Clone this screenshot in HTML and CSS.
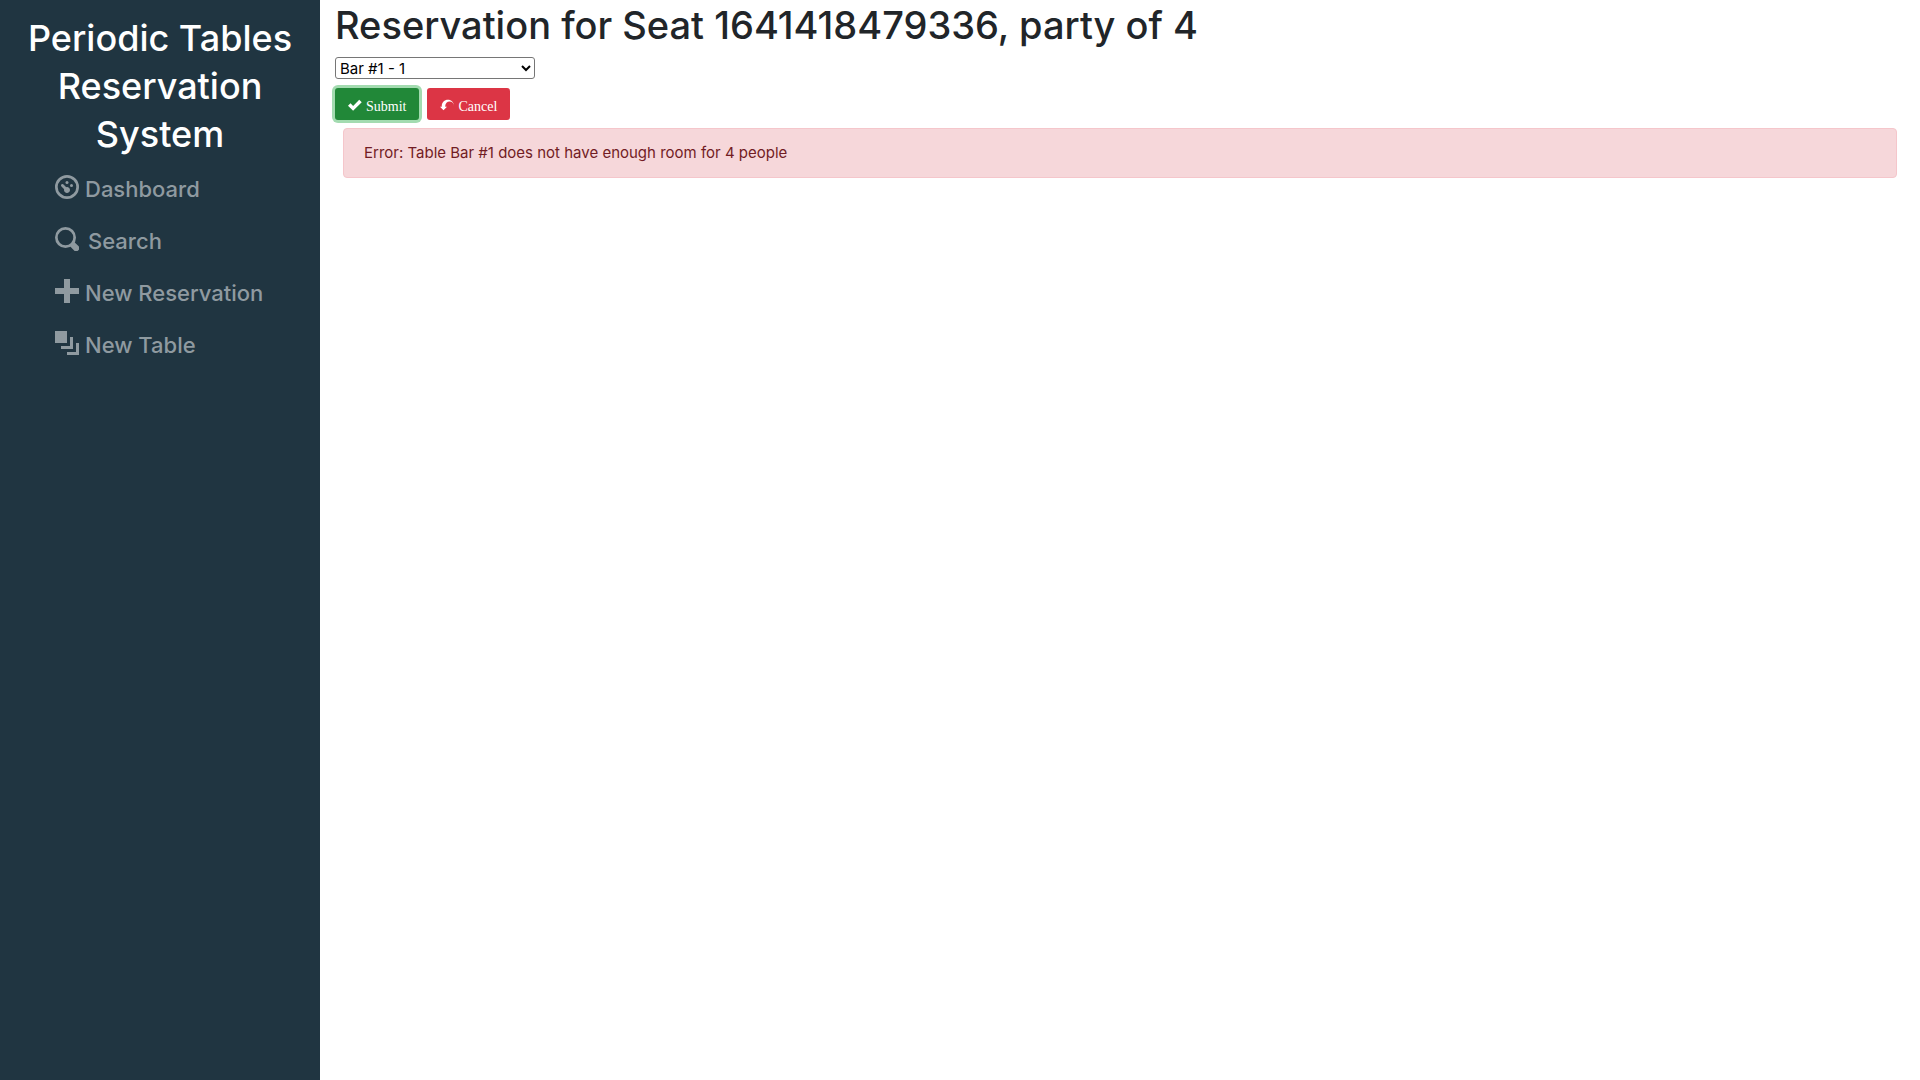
FILE: index.html
```html
<!DOCTYPE html>
<html lang="en">
<head>
<meta charset="utf-8">
<title>Periodic Tables Reservation System</title>
<link rel="stylesheet" href="styles.css">
</head>
<body>
<div class="layout">
  <aside class="sidebar">
    <div class="brand">Periodic Tables Reservation System</div>
    <nav class="nav">
      <a class="nav-link" href="#dashboard">
        <svg class="icon" viewBox="0 0 8 8" aria-hidden="true"><circle cx="4" cy="4" r="3.55" fill="none" stroke="currentColor" stroke-width=".9"/><circle cx="4" cy="2.5" r=".5"/><circle cx="5.5" cy="3.5" r=".5"/><path d="M2.34 3a.5.5 0 0 0-.19.84l.91.91c-.02.08-.06.16-.06.25 0 .55.45 1 1 1s1-.45 1-1-.45-1-1-1c-.09 0-.17.04-.25.06l-.91-.91a.5.5 0 0 0-.5-.15z"/></svg>
        <span>Dashboard</span>
      </a>
      <a class="nav-link nav-link-wide" href="#search">
        <svg class="icon" viewBox="0 0 8 8" aria-hidden="true"><circle cx="3.5" cy="3.5" r="3.05" fill="none" stroke="currentColor" stroke-width=".9"/><path d="M5 6.4l1.29 1.32a1.02 1.02 0 1 0 1.44-1.44l-1.32-1.29z"/></svg>
        <span>Search</span>
      </a>
      <a class="nav-link" href="#new-reservation">
        <svg class="icon" viewBox="0 0 8 8" aria-hidden="true"><path d="M3 0v3h-3v2h3v3h2v-3h3v-2h-3v-3h-2z"/></svg>
        <span>New Reservation</span>
      </a>
      <a class="nav-link" href="#new-table">
        <svg class="icon" viewBox="0 0 8 8" aria-hidden="true"><path d="M0 0v4h4v-4h-4zm5 2v3h-3v1h4v-4h-1zm2 2v3h-3v1h4v-4h-1z"/></svg>
        <span>New Table</span>
      </a>
    </nav>
  </aside>
  <main class="main">
    <h1 class="title">Reservation for Seat 1641418479336, party of 4</h1>
    <form class="form">
      <select class="table-select" name="table_id" aria-label="Table">
        <option>Bar #1 - 1</option>
      </select>
      <div class="actions">
        <button class="btn btn-submit" type="button"><svg class="btn-icon" viewBox="0 0 8 8" aria-hidden="true"><path d="M6.41 1l-.69.72-2.78 2.78-.81-.78-.72-.72-1.41 1.41.72.72 1.5 1.5.69.72.72-.72 3.5-3.5.72-.72-1.44-1.41z"/></svg>Submit</button>
        <button class="btn btn-cancel" type="button"><svg class="btn-icon" viewBox="0 0 8 8" aria-hidden="true"><path d="M4.5 1c-1.93 0-3.5 1.57-3.5 3.5v.5h-1l2 2 2-2h-1v-.5c0-1.39 1.11-2.5 2.5-2.5s2.5 1.11 2.5 2.5c0-1.93-1.57-3.5-3.5-3.5z"/></svg>Cancel</button>
      </div>
    </form>
    <div class="alert" role="alert">Error: Table Bar #1 does not have enough room for 4 people</div>
  </main>
</div>
</body>
</html>
```
FILE: styles.css
```css
* {
  box-sizing: border-box;
}

body {
  margin: 0;
  font-family: Inter, "Liberation Sans", sans-serif;
  font-size: 15px;
  line-height: 24px;
  color: #212529;
  background: #fff;
}

.layout {
  display: flex;
  min-height: 100vh;
}

.sidebar {
  flex: 0 0 320px;
  padding: 14px 16px;
  background: #203541;
}

.brand {
  margin-bottom: 4px;
  color: #fff;
  font-size: 36px;
  font-weight: 500;
  line-height: 48px;
  text-align: center;
}

.nav {
  display: flex;
  flex-direction: column;
  padding-left: 39px;
}

.nav-link {
  display: flex;
  gap: 6px;
  height: 52px;
  padding-top: 13px;
  color: #8f9aa0;
  font-size: 22px;
  font-weight: 500;
  line-height: 28px;
  text-decoration: none;
}

.nav-link-wide {
  gap: 9px;
}

.icon {
  width: 24px;
  height: 24px;
  fill: currentColor;
}

.main {
  flex: 1;
  min-width: 0;
  padding: 0 15px;
}

.title {
  margin: 0 0 7px;
  font-size: 38px;
  font-weight: 500;
  line-height: 50px;
}

.table-select {
  display: block;
  width: 200px;
  height: 22px;
  padding: 0;
  border: 1px solid #767676;
  border-radius: 3px;
  background: #fff;
  color: #000;
  font-family: inherit;
  font-size: 15px;
}

.actions {
  display: flex;
  gap: 8px;
  padding: 9px 0 8px;
}

.btn {
  display: flex;
  align-items: center;
  height: 32px;
  gap: 4px;
  padding: 6px 13px 0;
  border: 0;
  border-radius: 3px;
  color: #fff;
  font-family: "Liberation Serif", serif;
  font-size: 14px;
  line-height: 20px;
}

.btn-submit {
  background: #218838;
  box-shadow: 0 0 0 3px #a3dbb0;
}

.btn-cancel {
  background: #dc3545;
}

.btn-icon {
  width: 14px;
  height: 14px;
  margin-bottom: 5px;
  fill: currentColor;
}

.alert {
  margin: 0 8px;
  padding: 12px 20px;
  border: 1px solid #f5c6cb;
  border-radius: 4px;
  background: #f6d7da;
  color: #721c24;
}
```
